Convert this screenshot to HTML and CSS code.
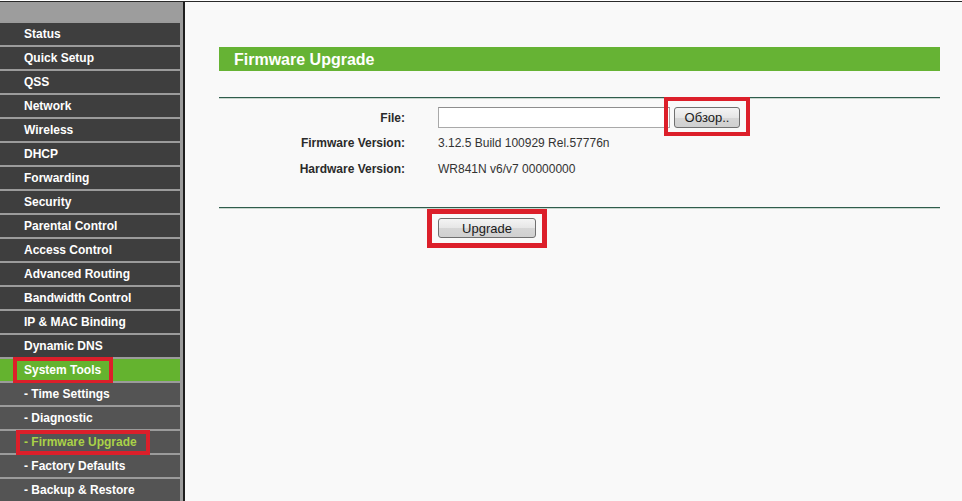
FILE: index.html
```html
<!DOCTYPE html>
<html>
<head>
<meta charset="utf-8">
<title>Firmware Upgrade</title>
<link rel="stylesheet" href="styles.css">
</head>
<body>
<div class="page">
  <nav class="sidebar">
    <div class="side-head"></div>
    <a class="item">Status</a>
    <a class="item">Quick Setup</a>
    <a class="item">QSS</a>
    <a class="item">Network</a>
    <a class="item">Wireless</a>
    <a class="item">DHCP</a>
    <a class="item">Forwarding</a>
    <a class="item">Security</a>
    <a class="item">Parental Control</a>
    <a class="item">Access Control</a>
    <a class="item">Advanced Routing</a>
    <a class="item">Bandwidth Control</a>
    <a class="item">IP &amp; MAC Binding</a>
    <a class="item">Dynamic DNS</a>
    <a class="item active">System Tools<span class="mark mark-sys"></span></a>
    <a class="item sub">- Time Settings</a>
    <a class="item sub">- Diagnostic</a>
    <a class="item sub current">- Firmware Upgrade<span class="mark mark-fw"></span></a>
    <a class="item sub">- Factory Defaults</a>
    <a class="item sub">- Backup &amp; Restore</a>
  </nav>
  <main class="content">
    <h1 class="title">Firmware Upgrade</h1>
    <div class="rule"></div>
    <div class="form">
      <div class="label">File:</div>
      <div class="value file">
        <input class="file-input" type="text">
        <span class="btn-wrap"><button class="btn browse">Обзор..</button><span class="mark mark-browse"></span></span>
      </div>
      <div class="label">Firmware Version:</div>
      <div class="value">3.12.5 Build 100929 Rel.57776n</div>
      <div class="label">Hardware Version:</div>
      <div class="value">WR841N v6/v7 00000000</div>
    </div>
    <div class="rule"></div>
    <div class="actions">
      <span class="btn-wrap"><button class="btn upgrade">Upgrade</button><span class="mark mark-upgrade"></span></span>
    </div>
  </main>
</div>
</body>
</html>
```

FILE: styles.css
```css
html, body {
  margin: 0;
  padding: 0;
  background: #f9f9f9;
  font-family: "Liberation Sans", Arial, sans-serif;
}
body {
  padding-top: 1px;
  background: #ffffff;
}
.page {
  display: flex;
  border-top: 1px solid #2a2a2a;
  height: 499px;
  overflow: hidden;
  background: #f9f9f9;
}
.sidebar {
  width: 183px;
  flex: none;
  background: #9b9b9b;
  border-right: 2px solid #1e1e1e;
  display: flex;
  flex-direction: column;
}
.side-head {
  height: 19px;
  background: #9d9d9d;
  margin-bottom: 2px;
  margin-right: 3px;
  flex: none;
}
.item {
  position: relative;
  display: block;
  height: 22px;
  line-height: 22px;
  margin: 0 3px 2px 0;
  padding-left: 24px;
  background: #3e3e3e;
  color: #ffffff;
  font-size: 12px;
  font-weight: bold;
  white-space: nowrap;
  flex: none;
}
.item.sub {
  background: #545454;
}
.item.active {
  background: #64b32f;
}
.item.current {
  color: #aad248;
}
.mark {
  position: absolute;
  border: 4px solid #dc1f2a;
  pointer-events: none;
}
.mark-sys {
  left: 13px;
  width: 92px;
  top: -2px;
  height: 19px;
}
.mark-fw {
  left: 16px;
  width: 126px;
  top: -1px;
  height: 17px;
}
.content {
  flex: 1;
  padding: 45px 22px 0 34px;
  font-size: 12px;
  color: #333333;
}
.title {
  margin: 0;
  height: 24px;
  line-height: 25px;
  background: #66b334;
  color: #ffffff;
  font-size: 16px;
  font-weight: bold;
  padding-left: 15px;
}
.rule {
  height: 1px;
  background: #2f5d4c;
  border-bottom: 1px solid #c9d6cf;
}
.content .title + .rule {
  margin-top: 26px;
}
.form {
  display: grid;
  grid-template-columns: 186px 1fr;
  column-gap: 33px;
  grid-template-rows: 25px 26px 26px;
  padding: 6px 0 25px;
  align-items: center;
}
.label {
  text-align: right;
  font-weight: bold;
  color: #2b2b2b;
}
.value {
  color: #333333;
}
.file {
  display: flex;
  align-items: center;
  gap: 4px;
}
.file-input {
  width: 232px;
  height: 21px;
  box-sizing: border-box;
  margin: 0;
  border: 1px solid #a9a9a9;
  border-top-color: #8e8e8e;
  background: #ffffff;
}
.btn-wrap {
  position: relative;
  display: inline-block;
}
.btn {
  display: block;
  margin: 0;
  box-sizing: border-box;
  border: 1px solid #707070;
  border-radius: 3px;
  background: linear-gradient(#f4f4f4, #e6e6e6 50%, #d6d6d6 51%, #d0d0d0);
  color: #1a1a1a;
  font-family: "Liberation Sans", Arial, sans-serif;
  font-size: 13px;
  padding: 0;
}
.browse {
  width: 66px;
  height: 21px;
}
.upgrade {
  width: 98px;
  height: 20px;
}
.mark-browse {
  left: -10px;
  right: -10px;
  top: -10px;
  bottom: -8px;
}
.actions {
  padding: 9px 0 0 219px;
}
.mark-upgrade {
  left: -11px;
  right: -11px;
  top: -9px;
  bottom: -10px;
  border-width: 5px;
}
```
